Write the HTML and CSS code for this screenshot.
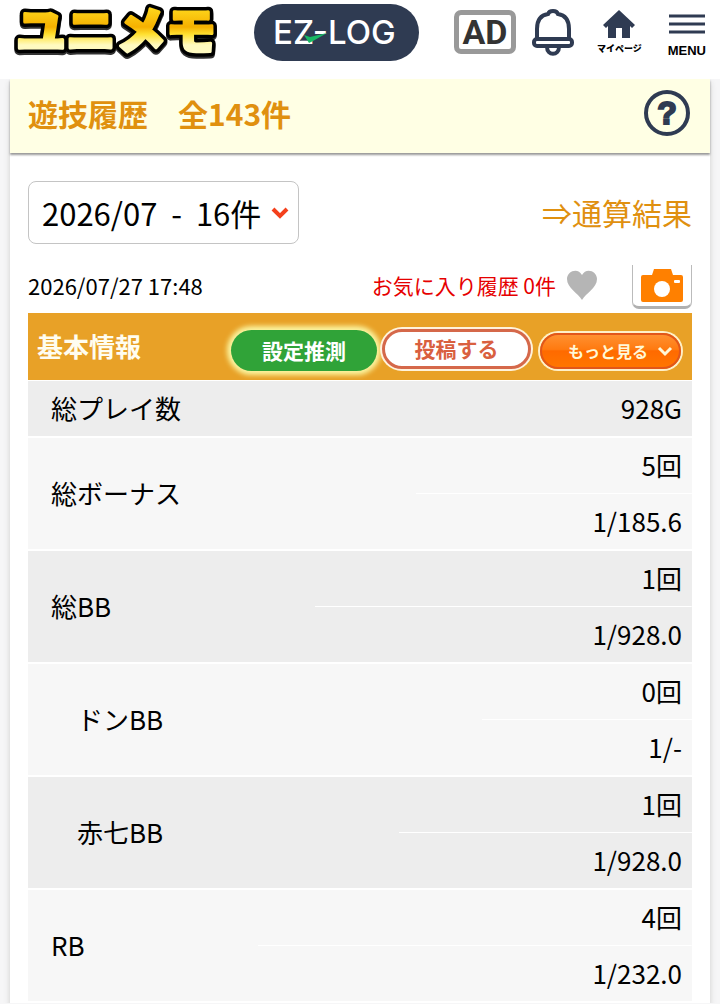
FILE: index.html
```
<!DOCTYPE html>
<html lang="ja">
<head>
  <meta charset="UTF-8">
  <meta name="viewport" content="width=device-width, initial-scale=1">
  <title>遊技履歴</title>
  <link rel="stylesheet" href="styles.css">
</head>
<body>
  <header class="header">
    <a href="#" class="logo">
      <svg width="208" height="64" viewBox="0 0 208 64">
        <defs>
          <linearGradient id="gold" x1="0" y1="0" x2="0" y2="1">
            <stop offset="0.2" stop-color="#ffdc20"/>
            <stop offset="0.5" stop-color="#f5b000"/>
            <stop offset="0.6" stop-color="#ffe030"/>
            <stop offset="0.75" stop-color="#fffac0"/>
          </linearGradient>
        </defs>
        <text x="4" y="47" class="logo-shadow">ユニメモ</text>
        <text x="4" y="45" class="logo-edge">ユニメモ</text>
        <text x="4" y="45" class="logo-face">ユニメモ</text>
      </svg>
    </a>
    <a href="#" class="ez-log">
      <svg width="165" height="57" viewBox="0 0 165 57">
        <text x="19" y="40" class="ez-text">EZ-LOG</text>
        <path d="M50 31L56 33L73 29L59 37L55 39Z" fill="#18b864"/>
      </svg>
    </a>
    <nav class="menu">
      <a href="#" class="ad">AD</a>
      <a href="#" class="bell" aria-label="お知らせ">
        <svg width="42" height="48" viewBox="0 0 42 48" fill="none" stroke="#2f3b52" stroke-width="4">
          <path d="M5 30V20C5 11 9 6 16 5Q17 2 21 2T26 5C33 6 37 11 37 20V30"/>
          <rect x="2" y="30" width="38" height="7" rx="3"/>
          <path d="M15 38C15 47 27 47 27 38"/>
        </svg>
      </a>
      <a href="#" class="menu-item mypage">
        <svg width="32" height="29" viewBox="0 0 32 29" fill="#2f3b52">
          <path d="M16 0L32 15L29 18L27 16V28H19V18H13V28H5V16L3 18L0 15Z"/>
        </svg>
        <span class="mypage-label">マイページ</span>
      </a>
      <button class="menu-item">
        <svg width="36" height="20" viewBox="0 0 36 20" stroke="#2f3b52" stroke-width="3">
          <path d="M0 2H36M0 10H36M0 18H36"/>
        </svg>
        <span class="menu-label">MENU</span>
      </button>
    </nav>
  </header>

  <main class="page">
    <div class="title-bar">
      <h1>遊技履歴　全143件</h1>
      <button class="help" aria-label="ヘルプ">
        <svg width="46" height="46" viewBox="0 0 46 46">
          <circle cx="23" cy="23" r="21" fill="none" stroke="#2f3b52" stroke-width="4"/>
          <text x="23" y="34" class="help-mark">?</text>
        </svg>
      </button>
    </div>

    <div class="content">
      <div class="filter">
        <div class="month">
          <select aria-label="年月">
            <option>2026/07&nbsp; -&nbsp; 16件</option>
          </select>
          <svg width="18" height="12" viewBox="0 0 18 12" fill="none" stroke="#f4401c" stroke-width="4">
            <path d="M2 2L9 9L16 2"/>
          </svg>
        </div>
        <a href="#" class="total">⇒通算結果</a>
      </div>

      <div class="record">
        <time>2026/07/27 17:48</time>
        <span class="favorite">お気に入り履歴 0件</span>
        <button class="heart" aria-label="お気に入り">
          <svg width="32" height="30" viewBox="0 0 32 30" fill="#b5b5b5">
            <path d="M16 30C12 23 1 18 1 9C1 1 12-3 16 5C20-3 31 1 31 9C31 18 20 23 16 30Z"/>
          </svg>
        </button>
        <button class="camera" aria-label="写真">
          <svg width="42" height="34" viewBox="0 0 42 34">
            <path d="M11 6L13 0H30L32 6H40Q42 6 42 8V31Q42 33 40 33H2Q0 33 0 31V8Q0 6 2 6Z" fill="#ff8000"/>
            <circle cx="21" cy="20" r="8" fill="#fff"/>
            <rect x="33" y="11" width="6" height="3" rx="1" fill="#fff"/>
          </svg>
        </button>
      </div>

      <div class="section-head">
        <h2>基本情報</h2>
        <button class="btn btn-guess">設定推測</button>
        <button class="btn btn-post">投稿する</button>
        <button class="btn btn-more">もっと見る
          <svg width="16" height="11" viewBox="0 0 16 11" fill="none" stroke="#fff8d8" stroke-width="3">
            <path d="M2 2L8 8L14 2"/>
          </svg>
        </button>
      </div>

      <table class="data">
        <tbody>
          <tr><th>総プレイ数</th><td>928G</td></tr>
        </tbody>
        <tbody>
          <tr><th rowspan="2">総ボーナス</th><td class="line">5回</td></tr>
          <tr><td>1/185.6</td></tr>
        </tbody>
        <tbody>
          <tr><th rowspan="2">総BB</th><td class="line line-l">1回</td></tr>
          <tr><td>1/928.0</td></tr>
        </tbody>
        <tbody>
          <tr><th rowspan="2" class="sub">ドンBB</th><td class="line line-s">0回</td></tr>
          <tr><td>1/-</td></tr>
        </tbody>
        <tbody>
          <tr><th rowspan="2" class="sub">赤七BB</th><td class="line line-m">1回</td></tr>
          <tr><td>1/928.0</td></tr>
        </tbody>
        <tbody>
          <tr><th rowspan="2">RB</th><td class="line line-xl">4回</td></tr>
          <tr><td>1/232.0</td></tr>
        </tbody>
      </table>
    </div>
  </main>
</body>
</html>
```
FILE: styles.css
```
* {
  box-sizing: border-box;
}
body {
  margin: 0;
  background: #f6f6f7;
  color: #000;
  font-family: "Noto Sans CJK JP", sans-serif;
}
a {
  text-decoration: none;
}
button {
  padding: 0;
  border: none;
  background: none;
  font-family: inherit;
  cursor: pointer;
}
svg {
  display: block;
}

/* header */
.header {
  position: relative;
  z-index: 1;
  display: flex;
  align-items: flex-start;
  justify-content: space-between;
  height: 79px;
  padding: 4px 14px 0 12px;
  background: #fff;
}
.logo svg {
  overflow: visible;
}
.logo-shadow,
.logo-edge,
.logo-face {
  font-size: 50px;
  font-weight: 900;
  stroke-linejoin: round;
}
.logo-shadow {
  fill: #444;
  stroke: #333;
  stroke-width: 10px;
}
.logo-edge {
  fill: #000;
  stroke: #000;
  stroke-width: 10px;
}
.logo-face {
  fill: url(#gold);
  stroke: url(#gold);
  stroke-width: 3px;
}
.ez-log {
  margin-left: 20px;
  border-radius: 30px;
  background: #2f3b52;
}
.ez-text {
  fill: #fff;
  font-family: Inter, sans-serif;
  font-size: 33px;
  font-weight: 500;
}
.menu {
  display: flex;
  align-items: flex-start;
  margin-left: 20px;
}
.ad {
  width: 62px;
  margin: 6px 16px 0 0;
  border: 5px solid #999;
  border-radius: 7px;
  color: #333;
  font-family: Roboto, sans-serif;
  font-size: 34px;
  font-weight: 700;
  line-height: 34px;
  text-align: center;
}
.bell {
  margin: 5px 23px 0 0;
}
.menu-item {
  display: flex;
  flex-direction: column;
  align-items: center;
  color: #000;
}
.mypage {
  margin: 6px 26px 0 0;
}
.mypage-label {
  font-size: 9px;
  font-weight: 900;
  line-height: 20px;
}
button.menu-item {
  margin-top: 10px;
}
.menu-label {
  padding-top: 9px;
  font-family: "Liberation Sans", sans-serif;
  font-size: 13px;
  font-weight: 700;
  line-height: 16px;
}

/* page */
.page {
  margin: 0 10px;
  background: #fff;
  box-shadow: 0 4px 6px #ccc;
}
.title-bar {
  display: flex;
  align-items: center;
  justify-content: space-between;
  height: 74px;
  padding: 0 20px 6px 18px;
  background: #ffffe4;
  box-shadow: 0 2px 2px #999;
}
h1 {
  margin: 0;
  color: #e0900f;
  font-size: 30px;
  font-weight: 700;
  line-height: 40px;
}
.help-mark {
  fill: #2f3b52;
  stroke: #2f3b52;
  stroke-width: 2px;
  font-family: "Liberation Sans", sans-serif;
  font-size: 32px;
  font-weight: 700;
  text-anchor: middle;
}
.content {
  padding: 28px 18px 0;
}
.filter {
  display: flex;
  align-items: center;
  justify-content: space-between;
}
.month {
  display: grid;
  align-items: center;
  width: 271px;
}
.month select,
.month svg {
  grid-area: 1 / 1;
}
.month select {
  appearance: none;
  height: 63px;
  padding: 0 0 0 13px;
  border: 1px solid #c4c4c4;
  border-radius: 8px;
  background: #fff;
  color: #000;
  font-family: inherit;
  font-size: 31px;
}
.month svg {
  justify-self: end;
  margin-right: 10px;
  pointer-events: none;
}
.total {
  padding-bottom: 2px;
  color: #e0900f;
  font-size: 30px;
  line-height: 40px;
}
.record {
  display: flex;
  align-items: center;
  height: 69px;
  padding-top: 13px;
}
time {
  font-size: 22px;
  line-height: 30px;
}
.favorite {
  margin-left: auto;
  color: #e60000;
  font-size: 21px;
  line-height: 30px;
}
.heart {
  margin-left: 10px;
}
.camera {
  display: flex;
  justify-content: center;
  width: 60px;
  height: 44px;
  margin: 3px 0 0 34px;
  padding-top: 4px;
  border: 1px solid #bbb;
  border-top: none;
  border-bottom: 3px solid #b0b0b0;
  border-radius: 0 0 7px 7px;
}

/* section */
.section-head {
  display: flex;
  align-items: center;
  height: 67px;
  padding: 0 11px 0 9px;
  background: #e8a127;
}
h2 {
  margin: 0 auto 0 0;
  padding-bottom: 2px;
  color: #fffdf0;
  font-size: 26px;
  font-weight: 700;
  line-height: 36px;
}
.btn {
  border-radius: 30px;
  font-size: 21px;
  font-weight: 700;
}
.btn-guess {
  width: 146px;
  height: 41px;
  margin: 8px 5px 0 0;
  padding-bottom: 2px;
  background: #30a338;
  box-shadow: 0 0 5px 4px #fbf5a0;
  color: #fff;
}
.btn-post {
  width: 149px;
  height: 40px;
  margin: 5px 9px 0 0;
  padding-bottom: 2px;
  border: 3px solid #d5684a;
  background: #fff;
  box-shadow: 0 0 0 2px #fff3dc;
  color: #d9603f;
}
.btn-more {
  display: flex;
  align-items: center;
  justify-content: center;
  gap: 9px;
  width: 141px;
  height: 36px;
  margin-top: 9px;
  padding-left: 20px;
  border: 2px solid #e2561a;
  background: linear-gradient(#ff9030, #ff7a10 45%, #ff6a00 50%, #ff7600);
  box-shadow: 0 0 0 2px #fff0c8;
  color: #fff8d8;
  font-size: 16px;
}

/* data table */
.data {
  width: 100%;
  margin-top: 1px;
  border-collapse: separate;
  border-spacing: 0;
  font-size: 26px;
  line-height: 36px;
}
.data tbody {
  background: #f7f7f7;
}
.data tbody:nth-child(odd) {
  background: #ededed;
}
.data th {
  width: 34%;
  padding: 0 0 2px 23px;
  border-bottom: 2px solid #fff;
  font-weight: 400;
  text-align: left;
}
.data th.sub {
  padding-left: 49px;
}
.data td {
  height: 57px;
  padding: 0 10px 2px 0;
  border-bottom: 2px solid #fff;
  text-align: right;
}
/* thin rule between the count and the rate */
.data td.line {
  height: 56px;
  border-bottom: none;
  background: linear-gradient(#fff, #fff) no-repeat right bottom / 63% 1px;
}
.data td.line-s {
  background-size: 48% 1px;
}
.data td.line-m {
  background-size: 67% 1px;
}
.data td.line-l {
  background-size: 86% 1px;
}
.data td.line-xl {
  background-size: 99% 1px;
}
```
